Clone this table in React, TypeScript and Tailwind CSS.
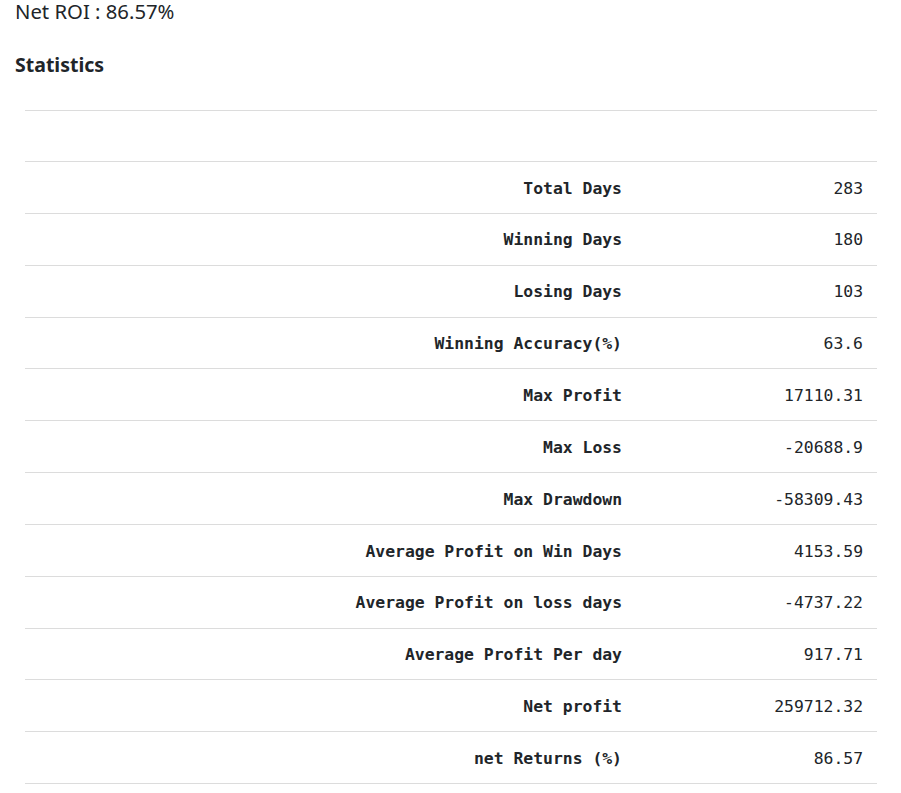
import React from "react";

const rows: [string, string][] = [
  ["Total Days", "283"],
  ["Winning Days", "180"],
  ["Losing Days", "103"],
  ["Winning Accuracy(%)", "63.6"],
  ["Max Profit", "17110.31"],
  ["Max Loss", "-20688.9"],
  ["Max Drawdown", "-58309.43"],
  ["Average Profit on Win Days", "4153.59"],
  ["Average Profit on loss days", "-4737.22"],
  ["Average Profit Per day", "917.71"],
  ["Net profit", "259712.32"],
  ["net Returns (%)", "86.57"],
];

export default function App() {
  return (
    <div className="bg-white min-h-[793px] text-[#212529] pl-[15px] font-['Noto_Sans','Open_Sans',sans-serif]">
      <div className="text-[20.3px] leading-[23px] text-[#212529]">Net ROI : 86.57%</div>
      <div className="mt-[30px] text-[19.5px] leading-[24px] font-bold">Statistics</div>
      <div className="ml-[10px] mt-[33px] w-[852px] font-['DejaVu_Sans_Mono','Liberation_Mono',monospace] text-[16.4px]">
        <div className="h-[51px] border-t border-[#dcdcdc]" />
        {rows.map(([k, v]) => (
          <div key={k} className="flex items-center pt-[3px] h-[51.85px] border-t border-[#dcdcdc]">
            <div className="w-[612px] pr-[15px] text-right font-bold">{k}</div>
            <div className="flex-1 pr-[14px] text-right">{v}</div>
          </div>
        ))}
        <div className="border-t border-[#dcdcdc]" />
      </div>
    </div>
  );
}
